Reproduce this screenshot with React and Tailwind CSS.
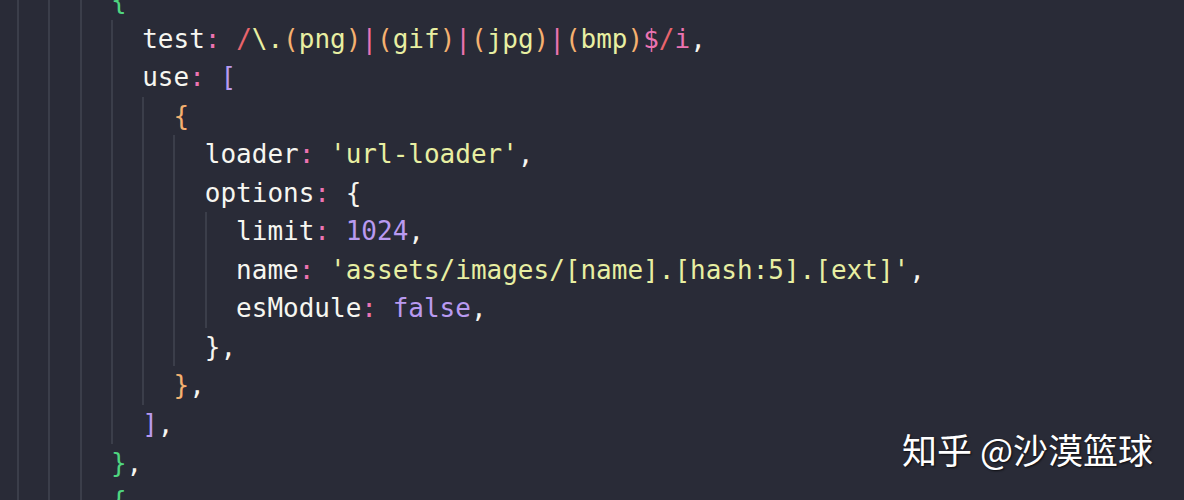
import React from "react";

const W = "text-[#f6f6f0]";
const P = "text-[#ec73b2]"; // pink
const R = "text-[#e8646c]"; // red
const O = "text-[#f5b170]"; // orange
const Y = "text-[#e8efa2]"; // yellow
const V = "text-[#b99af0]"; // purple
const G = "text-[#4fd680]"; // green

const lines = [
  { level: 3, parts: [["{", G]] },
  {
    level: 4,
    parts: [
      ["test", W],
      [":", P],
      [" ", W],
      ["/", R],
      ["\\.", Y],
      ["(", O],
      ["png", Y],
      [")", O],
      ["|", P],
      ["(", O],
      ["gif", Y],
      [")", O],
      ["|", P],
      ["(", O],
      ["jpg", Y],
      [")", O],
      ["|", P],
      ["(", O],
      ["bmp", Y],
      [")", O],
      ["$", P],
      ["/", R],
      ["i", P],
      [",", W],
    ],
  },
  { level: 4, parts: [["use", W], [":", P], [" ", W], ["[", V]] },
  { level: 5, parts: [["{", O]] },
  { level: 6, parts: [["loader", W], [":", P], [" ", W], ["'url-loader'", Y], [",", W]] },
  { level: 6, parts: [["options", W], [":", P], [" {", W]] },
  { level: 7, parts: [["limit", W], [":", P], [" ", W], ["1024", V], [",", W]] },
  {
    level: 7,
    parts: [["name", W], [":", P], [" ", W], ["'assets/images/[name].[hash:5].[ext]'", Y], [",", W]],
  },
  { level: 7, parts: [["esModule", W], [":", P], [" ", W], ["false", V], [",", W]] },
  { level: 6, parts: [["},", W]] },
  { level: 5, parts: [["}", O], [",", W]] },
  { level: 4, parts: [["]", V], [",", W]] },
  { level: 3, parts: [["}", G], [",", W]] },
  { level: 3, parts: [["{", G]] },
];

export default function App() {
  return (
    <div className="relative w-[1184px] h-[500px] overflow-hidden bg-[#292b37]">
      <div
        className="mt-[-19px] pl-[17px] text-[26px] leading-[38.55px]"
        style={{ fontFamily: '"DejaVu Sans Mono", "Liberation Mono", monospace' }}
      >
        {lines.map((ln, i) => (
          <div key={i} className="flex h-[38.55px] whitespace-pre">
            {Array.from({ length: ln.level }).map((_, k) => (
              <span key={k} className="w-[2ch] shrink-0 border-l-2 border-[#3b3e4a]" />
            ))}
            <span>
              {ln.parts.map(([t, c], j) => (
                <span key={j} className={c}>
                  {t}
                </span>
              ))}
            </span>
          </div>
        ))}
      </div>
      <div
        className="absolute right-[31px] top-[431px] text-[35px] leading-none text-white [text-shadow:1px_1px_2px_rgba(0,0,0,0.7)]"
        style={{ fontFamily: '"Noto Sans CJK SC", "Noto Sans", sans-serif' }}
      >
        知乎 @沙漠篮球
      </div>
    </div>
  );
}
